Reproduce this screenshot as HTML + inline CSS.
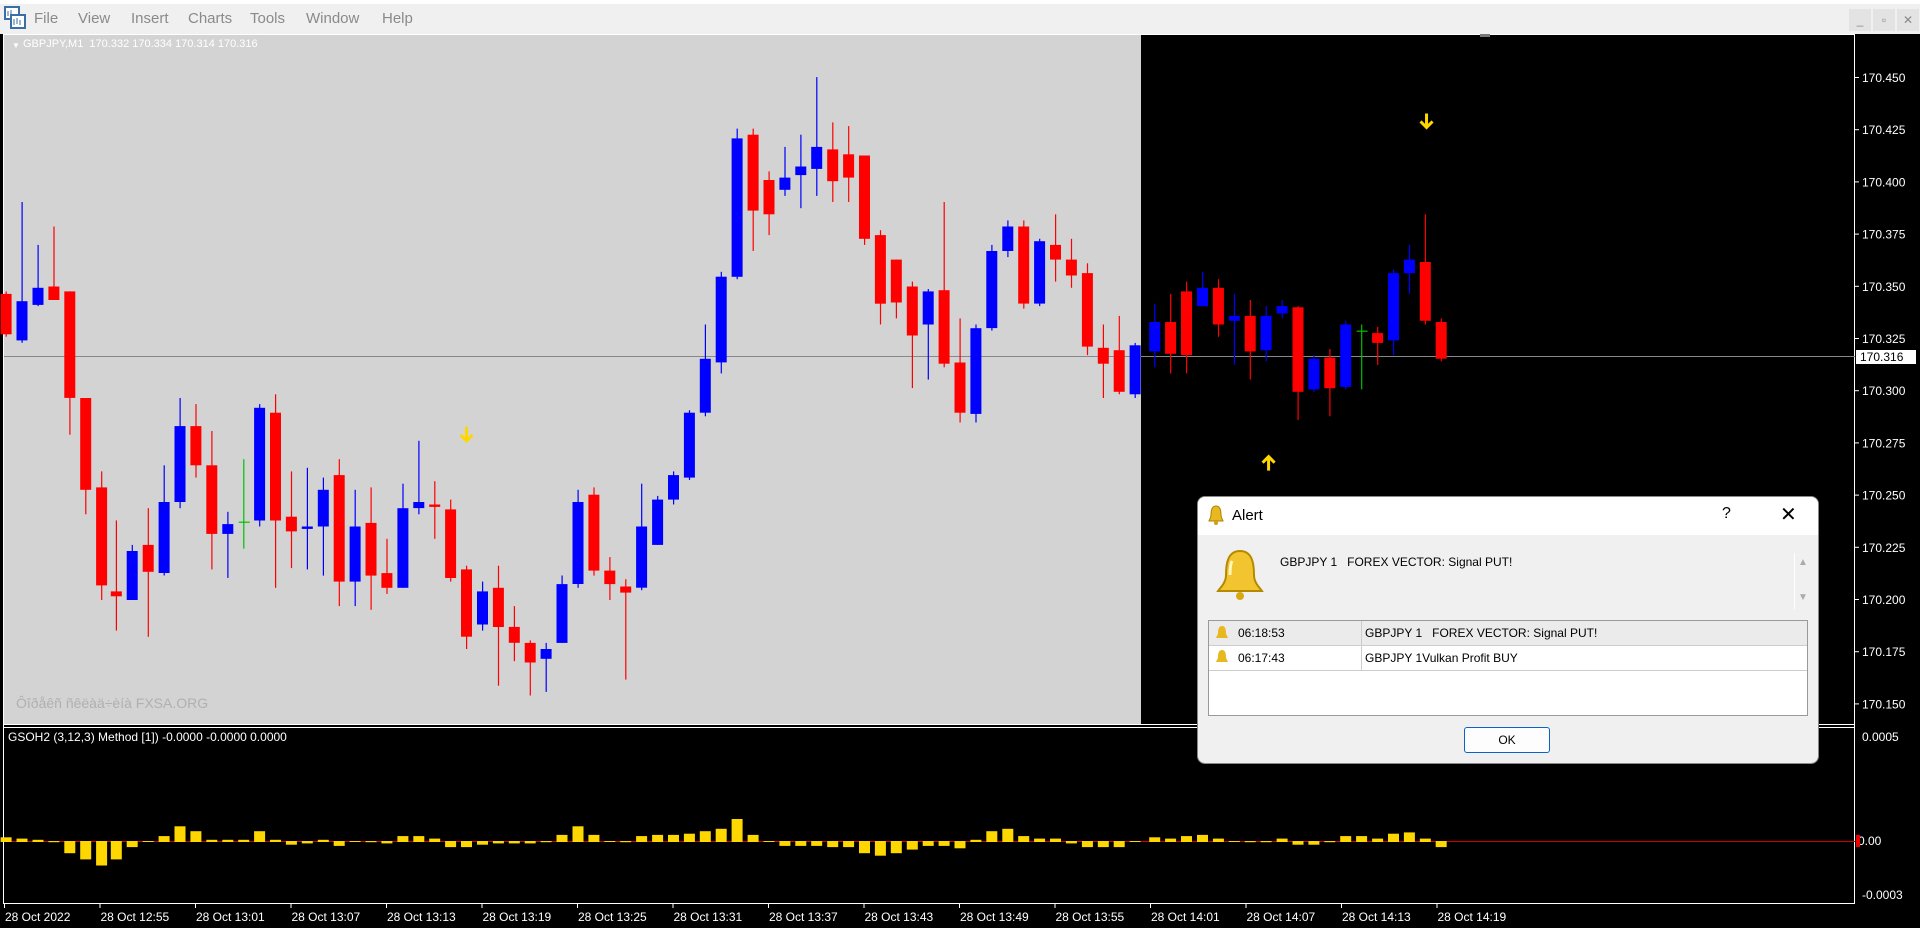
<!DOCTYPE html>
<html><head><meta charset="utf-8"><style>
html,body{margin:0;padding:0;width:1920px;height:928px;overflow:hidden;background:#000;font-family:"Liberation Sans",sans-serif}
#menu{position:absolute;left:0;top:0;width:1920px;height:34px;background:#f0f0f0;border-top:4px solid #fff;box-sizing:border-box}
#menu span{position:absolute;top:6px;font-size:15px;color:#8a8a8a}
.wb{position:absolute;top:5px;width:22px;height:22px;background:#e3e3e3;color:#888;font-size:12px;text-align:center;line-height:22px}
svg text{font-family:"Liberation Sans",sans-serif}
#alert{position:absolute;left:1198px;top:497px;width:620px;height:266px;background:#f0f0f0;border-radius:7px;box-shadow:0 0 0 1px #888}
#alert .tb{height:38px;background:#fff;border-radius:7px 7px 0 0;position:relative}
#alert .t{position:absolute;left:34px;top:10px;font-size:15px;color:#000}
.sm{font-size:12px;color:#000}
</style></head><body>
<div id="menu">
<svg style="position:absolute;left:4px;top:2px" width="22" height="24"><rect x="1" y="1" width="14" height="12" fill="#fff" stroke="#3a6ea5" stroke-width="2"/><rect x="7" y="9" width="14" height="13" fill="#fff" stroke="#3a6ea5" stroke-width="2"/><path d="M4 5v5M7 4v5M10 13v6M13 12v6M16 14v5" stroke="#3a6ea5"/></svg>
<span style="left:34px">File</span><span style="left:78px">View</span><span style="left:131px">Insert</span><span style="left:188px">Charts</span><span style="left:250px">Tools</span><span style="left:306px">Window</span><span style="left:382px">Help</span>
<div class="wb" style="left:1849px">_</div><div class="wb" style="left:1873px">▫</div><div class="wb" style="left:1897px">✕</div>
</div>
<svg id="ch" style="position:absolute;left:0;top:34px" width="1920" height="894"></svg>
<div id="alert">
 <div class="tb"><svg style="position:absolute;left:10px;top:8px" width="16" height="22"><path d="M8 1c-4 0-5 4-5 9 0 3-2 5-2 6h14c0-1-2-3-2-6 0-5-1-9-5-9z" fill="#e8b820" stroke="#b08000"/><circle cx="8" cy="18" r="2" fill="#d4a010"/></svg><span class="t">Alert</span><span style="position:absolute;left:524px;top:8px;font-size:16px">?</span><span style="position:absolute;left:582px;top:5px;font-size:20px">✕</span></div>
 <svg style="position:absolute;left:14px;top:50px" width="56" height="56"><path d="M28 4c-12 0-14 12-14 24 0 8-6 13-8 16h44c-2-3-8-8-8-16 0-12-2-24-14-24z" fill="#f2c530" stroke="#b58a00" stroke-width="2"/><path d="M20 14c-2 4-2 10-2 14" stroke="#fff6c0" stroke-width="3" fill="none"/><circle cx="28" cy="49" r="4" fill="#d8a810"/></svg>
 <div class="sm" style="position:absolute;left:82px;top:58px">GBPJPY 1&nbsp;&nbsp;&nbsp;FOREX VECTOR: Signal PUT!</div>
 <div style="position:absolute;left:596px;top:56px;width:1px;height:56px;background:#fff"></div>
 <div style="position:absolute;left:600px;top:60px;color:#aaa;font-size:10px">▲</div>
 <div style="position:absolute;left:600px;top:95px;color:#aaa;font-size:10px">▼</div>
 <div style="position:absolute;left:10px;top:123px;width:598px;height:94px;background:#fff;border:1px solid #999">
  <div style="height:24px;background:#ebebeb;border-bottom:1px solid #ccc;position:relative">
   <span class="sm" style="position:absolute;left:29px;top:5px">06:18:53</span><span class="sm" style="position:absolute;left:156px;top:5px">GBPJPY 1&nbsp;&nbsp;&nbsp;FOREX VECTOR: Signal PUT!</span></div>
  <div style="height:24px;border-bottom:1px solid #ccc;position:relative">
   <span class="sm" style="position:absolute;left:29px;top:5px">06:17:43</span><span class="sm" style="position:absolute;left:156px;top:5px">GBPJPY 1Vulkan Profit BUY</span></div>
  <div style="position:absolute;left:152px;top:0;width:1px;height:49px;background:#ccc"></div>
  <svg style="position:absolute;left:6px;top:4px" width="14" height="44"><path d="M7 1c-3 0-4 3-4 7 0 2-2 4-2 5h12c0-1-2-3-2-5 0-4-1-7-4-7z" fill="#e8b820"/><path d="M7 25c-3 0-4 3-4 7 0 2-2 4-2 5h12c0-1-2-3-2-5 0-4-1-7-4-7z" fill="#e8b820"/></svg>
 </div>
 <div style="position:absolute;left:266px;top:230px;width:84px;height:24px;border:1px solid #0a64c8;border-radius:3px;background:#fdfdfd;text-align:center;line-height:24px;font-size:12px">OK</div>
</div>
<script>
var f=1.2245,s=document.getElementById('ch'),h='';
function R(x,y,w,hh,c){h+='<rect x="'+x.toFixed(1)+'" y="'+y.toFixed(1)+'" width="'+w.toFixed(1)+'" height="'+Math.max(hh,1).toFixed(1)+'" fill="'+c+'"/>';}
function T(x,y,t,c,sz,a){h+='<text x="'+x+'" y="'+y+'" fill="'+c+'" font-size="'+(sz||12)+'"'+(a?' text-anchor="'+a+'"':'')+'>'+t+'</text>';}
// y here relative to svg (top=34 page)
R(0,0,1920,894,'#000');
R(4,0,1137,691,'#d3d3d3');
h+='<rect x="3.5" y="0.5" width="1851" height="869" fill="none" stroke="#fff"/>';
R(4,690,1851,1,'#fff');R(4,693,1851,1,'#fff');
R(4,322,1851,1,'#888');
// price labels
var pl=['170.450','170.425','170.400','170.375','170.350','170.325','170.300','170.275','170.250','170.225','170.200','170.175','170.150'];
for(var i=0;i<pl.length;i++){var y=43+i*52.2;R(1855,y,4,1,'#fff');T(1862,y+5,pl[i],'#fff',12);}
R(1856,316,60,14,'#fff');T(1860,327,'170.316','#000',12);
T(1862,707,'0.0005','#fff',12);T(1862,865,'-0.0003','#fff',12);
R(1856,800,60,14,'#000');T(1858,811,'0.00','#fff',12);R(1856,801,4,12,'#e00');
R(4,807,1851,1,'#d00000');
T(12,14,'▼','#fff',8);T(23,13,'GBPJPY,M1&#160;&#160;170.332 170.334 170.314 170.316','#fff',11);
T(16,674,'Ôîðåêñ ñêëàä÷èíà FXSA.ORG','#b0b0b0',14);
T(8,707,'GSOH2 (3,12,3) Method [1]) -0.0000 -0.0000 0.0000','#fff',12);
var tl=['28 Oct 2022','28 Oct 12:55','28 Oct 13:01','28 Oct 13:07','28 Oct 13:13','28 Oct 13:19','28 Oct 13:25','28 Oct 13:31','28 Oct 13:37','28 Oct 13:43','28 Oct 13:49','28 Oct 13:55','28 Oct 14:01','28 Oct 14:07','28 Oct 14:13','28 Oct 14:19'];
for(i=0;i<tl.length;i++){var x=4+i*95.5;R(x,870,1,4,'#fff');T(x+1,887,tl[i],'#fff',12);}
var C=[[5,'r',240,273,238,275],[18,'b',246,278,165,280],[31,'b',235,249,200,250],[44,'r',234,245,185,245],[57,'r',238,325,238,355],[70,'r',325,400,325,420],[83,'r',398,478,385,490],[95,'r',483,487,425,515],[108,'b',450,490,445,490],[121,'r',445,467,415,520],[134,'b',410,468,380,470],[147,'b',348,410,325,415],[160,'r',348,380,330,390],[173,'r',380,436,352,465],[186,'b',428,436,418,472],[199,'g',426,427,375,448],[212,'b',333,425,330,430],[225,'r',337,425,322,480],[238,'r',422,434,385,464],[251,'b',430,432,382,465],[264,'b',400,430,390,470],[277,'r',388,475,375,495],[290,'b',430,475,400,495],[303,'r',427,470,398,498],[316,'r',468,480,440,485],[329,'b',415,480,395,480],[342,'b',410,415,360,420],[355,'r',412,414,393,440],[368,'r',416,472,408,475],[381,'r',465,520,462,530],[394,'b',483,510,475,515],[407,'r',480,512,462,560],[420,'r',512,525,495,540],[433,'r',525,541,523,568],[446,'b',530,538,525,565],[459,'b',477,525,470,525],[472,'b',410,477,400,480],[485,'r',404,466,398,470],[498,'r',466,477,455,490],[511,'r',479,484,473,555],[524,'b',430,480,395,482],[537,'b',408,445,405,445],[550,'b',388,408,385,412],[563,'b',337,390,335,392],[576,'b',293,337,265,340],[589,'b',226,296,222,305],[602,'b',113,226,105,228],[615,'r',110,172,105,205],[628,'r',147,175,140,192],[641,'b',145,155,120,160],[654,'b',136,143,110,170],[667,'b',120,138,63,160],[680,'r',122,148,100,165],[693,'r',126,145,103,165],[706,'r',127,195,127,200],[719,'r',192,248,188,265],[732,'r',212,247,212,260],[745,'r',234,274,230,317],[758,'b',238,265,236,310],[771,'r',237,297,165,300],[784,'r',296,337,260,345],[797,'b',268,338,265,345],[810,'b',205,268,200,270],[823,'b',185,205,180,210],[836,'r',185,248,180,252],[849,'b',197,248,195,250],[862,'r',200,212,175,230],[875,'r',212,225,195,235],[888,'r',223,283,215,290],[901,'r',284,297,265,325],[914,'r',286,320,258,322],[927,'b',282,322,280,325],[943,'b',263,287,248,300],[956,'r',263,289,240,305],[969,'r',238,290,230,305],[982,'b',235,250,222,248],[995,'r',235,265,228,275],[1008,'b',258,262,240,298],[1021,'r',258,287,245,310],[1034,'b',258,286,250,295],[1047,'b',250,256,245,260],[1060,'r',251,320,250,343],[1073,'b',293,318,290,320],[1086,'r',292,317,285,340],[1099,'b',265,316,262,318],[1112,'g',270,271,265,318],[1125,'r',272,280,267,298],[1138,'b',223,278,220,290],[1151,'b',212,223,200,240],[1164,'r',214,262,175,265],[1177,'r',263,293,260,295]];
var col={r:'#ff0000',b:'#0000ff',g:'#00c000'};
var I=[3,2,1,-1,-10,-15,-20,-15,-5,0,4,12,8,1,1,1,8,1,-3,-2,1,-4,0,-1,-2,4,4,2,-5,-5,-3,-2,-2,-2,-1,5,12,5,0,-1,4,5,5,6,8,10,18,5,0,-4,-4,-4,-5,-5,-10,-12,-10,-7,-4,-4,-6,1,8,10,4,2,2,-2,-5,-5,-5,0,3,2,4,5,2,0,-1,-1,2,-3,-3,-1,4,4,2,6,7,2,-5];
for(i=0;i<C.length;i++){var c=C[i],x=c[0]*f,cc=col[c[1]],oy=-34;
 var wc=(c[1]=='r'&&c[0]>930)?'#ff0000':cc;
 R(x-0.5,c[4]*f+oy,1.2,(c[5]-c[4])*f,wc);
 if(c[1]=='g')R(x-5,c[2]*f+oy,11,1.2,cc);else R(x-5.5,c[2]*f+oy,11,(c[3]-c[2])*f,cc);
 var v=I[i]*f,zy=807;
 if(v>=0)R(x-5.5,zy-v,11,v+1,'#ffd700');else R(x-5.5,zy,11,-v,'#ffd700');}
function arrow(x,y,d){x*=f;y=y*f-34;var p=d?'M'+(x-6)+' '+(y-1)+'l6 6 6-6M'+x+' '+(y-9)+'v13':'M'+(x-6)+' '+(y+1)+'l6-6 6 6M'+x+' '+(y+9)+'v-13';h+='<path d="'+p+'" stroke="#ffd700" stroke-width="3" fill="none"/>';}
arrow(381,356,1);arrow(1165,100,1);arrow(1036,377,0);
R(1480,0,10,3,'#777');
s.innerHTML=h;
</script>
</body></html>
